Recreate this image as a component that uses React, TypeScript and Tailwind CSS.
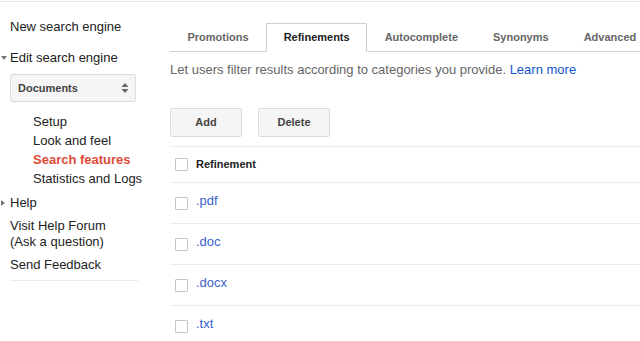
import React from 'react';

const tabs = ['Promotions', 'Refinements', 'Autocomplete', 'Synonyms', 'Advanced'];
const rows = ['.pdf', '.doc', '.docx', '.txt'];

const Box = () => (
  <span className="block h-[13px] w-[13px] shrink-0 rounded-[1px] border border-[#c6c6c6] bg-white" />
);

const App = () => {
  return (
    <div className="h-[341px] w-[640px] overflow-hidden bg-white pt-px font-['Liberation_Sans',Arial,sans-serif] text-[13px] text-[#222]">
      <div className="flex h-full border-t border-[#e5e5e5]">
        {/* sidebar */}
        <div className="flex w-[170px] shrink-0 flex-col">
          <div className="mt-[15px] pl-[10px] leading-[19px]">New search engine</div>
          <div className="mt-[12px] flex items-center leading-[19px]">
            <span className="flex w-[10px] justify-start pl-[1px]">
              <svg width="6" height="4" viewBox="0 0 6 4">
                <path d="M0 0h6L3 4z" fill="#777" />
              </svg>
            </span>
            Edit search engine
          </div>
          <div className="ml-[10px] mt-[7px] flex h-[28px] w-[126px] items-center justify-between rounded-[2px] border border-[#dcdcdc] bg-[#f5f5f5] pl-[7px] pr-[6px] text-[11px] font-bold text-[#444]">
            <span>Documents</span>
            <svg width="8" height="12" viewBox="0 0 8 12">
              <path d="M4 1L7.5 5H0.5z" fill="#666" />
              <path d="M4 11L7.5 7H0.5z" fill="#666" />
            </svg>
          </div>
          <div className="mt-[10px] flex flex-col pl-[33px] leading-[19px]">
            <span>Setup</span>
            <span>Look and feel</span>
            <span className="font-bold text-[#dd4b39]">Search features</span>
            <span>Statistics and Logs</span>
          </div>
          <div className="mt-[5px] flex items-center leading-[19px]">
            <span className="flex w-[10px] pl-[1px]">
              <svg width="4" height="6" viewBox="0 0 4 6">
                <path d="M0 0v6l4-3z" fill="#777" />
              </svg>
            </span>
            Help
          </div>
          <div className="mt-[6px] pl-[10px] leading-[16px]">
            Visit Help Forum
            <br />
            (Ask a question)
          </div>
          <div className="mt-[5px] pl-[10px] leading-[19px]">Send Feedback</div>
          <div className="ml-[10px] mt-[6px] w-[128px] border-t border-[#ebebeb]" />
        </div>

        {/* main */}
        <div className="flex min-w-0 flex-1 flex-col">
          <div className="mt-[21px] flex border-b border-[#cfcfcf] text-[11px] font-bold">
            {tabs.map((t) => (
              <div
                key={t}
                className={
                  t === 'Refinements'
                    ? '-mb-px flex h-[29px] shrink-0 items-center whitespace-nowrap border border-b-white border-[#cfcfcf] bg-white px-[16.5px] text-[#222]'
                    : 'flex h-[28px] shrink-0 items-center whitespace-nowrap border border-transparent px-[16.5px] text-[#666]'
                }
              >
                {t}
              </div>
            ))}
          </div>
          <div className="mt-[9px] leading-[18px] text-[#666]">
            Let users filter results according to categories you provide.{' '}
            <span className="text-[#1155cc]">Learn more</span>
          </div>
          <div className="mt-[29px] flex gap-[16px] text-[11px] font-bold text-[#444]">
            <div className="flex h-[29px] w-[72px] items-center justify-center rounded-[2px] border border-[#dcdcdc] bg-[#f5f5f5]">
              Add
            </div>
            <div className="flex h-[29px] w-[72px] items-center justify-center rounded-[2px] border border-[#dcdcdc] bg-[#f5f5f5]">
              Delete
            </div>
          </div>
          <div className="mt-[9px] border-t border-[#ebebeb]">
            <div className="flex h-[36px] items-center gap-[8px] border-b border-[#ebebeb] pl-[5px] text-[11px] font-bold text-[#222]">
              <Box />
              <span>Refinement</span>
            </div>
            {rows.map((r) => (
              <div
                key={r}
                className="flex h-[41px] items-center gap-[8px] border-b border-[#ebebeb] pl-[5px]"
              >
                <Box />
                <span className="-mt-[5px] text-[#3b5fcc]">{r}</span>
              </div>
            ))}
          </div>
        </div>
      </div>
    </div>
  );
};

export default App;
